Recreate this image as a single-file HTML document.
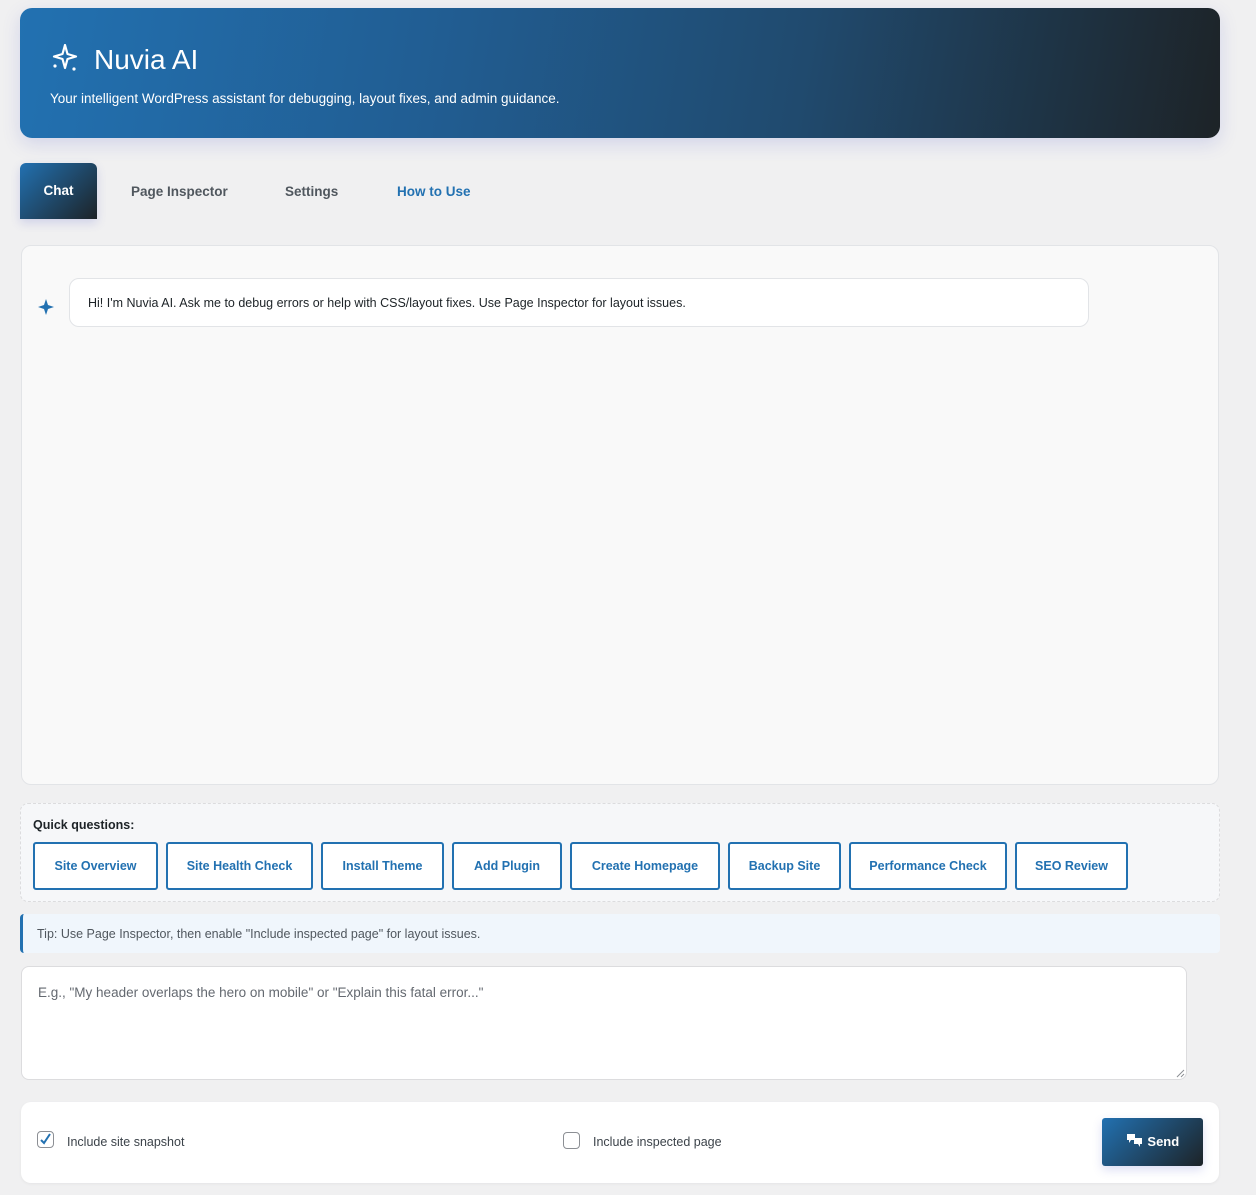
<!DOCTYPE html>
<html><head><meta charset="utf-8"><style>
*{box-sizing:border-box}
body{margin:0;background:#f0f0f1;font-family:"Liberation Sans",sans-serif;color:#1d2327;width:1256px;height:1195px;position:relative;overflow:hidden}
.abs{position:absolute}
.hdr{left:20px;top:8px;width:1200px;height:130px;border-radius:12px;background:linear-gradient(100deg,#2271b1 0%,#215d92 35%,#204a6e 65%,#1d2327 100%);box-shadow:0 6px 18px rgba(80,90,200,.18);color:#fff}
.hdr h1{position:absolute;left:74px;top:36px;margin:0;font-size:28px;font-weight:normal}
.hdr p{position:absolute;left:30px;top:83px;margin:0;font-size:13.5px}
.tab{top:163px;height:56px;font-size:13.5px;font-weight:bold;color:#50575e;line-height:58px}
.chat{left:20px;top:163px;width:77px;background:linear-gradient(135deg,#2271b1,#1d2327);color:#fff;text-align:center;border-radius:6px 6px 0 0;line-height:56px;box-shadow:0 4px 10px rgba(80,90,200,.2)}
.panel{left:21px;top:245px;width:1198px;height:540px;background:#f9f9f9;border:1px solid #e2e4e7;border-radius:10px}
.bubble{left:69px;top:278px;width:1020px;height:49px;background:#fff;border:1px solid #e2e4e7;border-radius:10px;font-size:12.5px;padding:0 18px;line-height:48px}
.quick{left:20px;top:803px;width:1200px;height:99px;background:#f6f7f9;border:1px dashed #dcdcde;border-radius:8px}
.btn{top:842px;height:48px;border:2px solid #2271b1;border-radius:3px;background:#fff;color:#2271b1;font-size:12.5px;font-weight:bold;text-align:center;line-height:44px}
.tip{left:20px;top:914px;width:1200px;height:39px;background:#f0f6fc;border-left:3px solid #2271b1;border-radius:4px;font-size:12.5px;color:#50575e;line-height:40px;padding-left:14px}
.ta{left:21px;top:966px;width:1166px;height:114px;background:#fff;border:1px solid #dcdcde;border-radius:8px;font-size:13.5px;color:#646970;padding:18px 16px}
.bot{left:21px;top:1102px;width:1198px;height:81px;background:#fff;border-radius:10px;box-shadow:0 1px 3px rgba(0,0,0,.05)}
.cb{width:17px;height:17px;border:1px solid #8c8f94;border-radius:4px;background:#fff}
.lbl{font-size:12.5px;color:#3c434a}
.send{left:1102px;top:1118px;width:101px;height:48px;background:linear-gradient(135deg,#2271b1,#1d2327);border-radius:3px;color:#fff;font-size:13px;font-weight:bold;line-height:48px;text-align:center;box-shadow:0 4px 10px rgba(80,90,200,.2)}
</style></head><body>
<div class="abs hdr">
<svg class="abs" style="left:32px;top:36px" width="28" height="28" viewBox="0 0 28 28" fill="#fff"><path d="M13 1 L15.5 10 L24 12.5 L15.5 15 L13 24 L10.5 15 L2 12.5 L10.5 10Z" fill="none" stroke="#fff" stroke-width="2.2" stroke-linejoin="round"/><circle cx="3" cy="22" r="1.6"/><circle cx="22" cy="25" r="1.6"/></svg>
<h1>Nuvia AI</h1>
<p>Your intelligent WordPress assistant for debugging, layout fixes, and admin guidance.</p>
</div>
<div class="abs tab chat">Chat</div>
<div class="abs tab" style="left:131px">Page Inspector</div>
<div class="abs tab" style="left:285px">Settings</div>
<div class="abs tab" style="left:397px;color:#2271b1">How to Use</div>
<div class="abs panel"></div>
<svg class="abs" style="left:38px;top:299px" width="16" height="16" viewBox="0 0 16 16"><path d="M8 0 L10 6 L16 8 L10 10 L8 16 L6 10 L0 8 L6 6Z" fill="#2271b1"/></svg>
<div class="abs bubble">Hi! I'm Nuvia AI. Ask me to debug errors or help with CSS/layout fixes. Use Page Inspector for layout issues.</div>
<div class="abs quick"></div>
<div class="abs" style="left:33px;top:818px;font-size:12.5px;font-weight:bold">Quick questions:</div>
<div class="abs btn" style="left:33px;width:125px">Site Overview</div>
<div class="abs btn" style="left:166px;width:147px">Site Health Check</div>
<div class="abs btn" style="left:321px;width:123px">Install Theme</div>
<div class="abs btn" style="left:452px;width:110px">Add Plugin</div>
<div class="abs btn" style="left:570px;width:150px">Create Homepage</div>
<div class="abs btn" style="left:728px;width:113px">Backup Site</div>
<div class="abs btn" style="left:849px;width:158px">Performance Check</div>
<div class="abs btn" style="left:1015px;width:113px">SEO Review</div>
<div class="abs tip">Tip: Use Page Inspector, then enable "Include inspected page" for layout issues.</div>
<div class="abs ta">E.g., "My header overlaps the hero on mobile" or "Explain this fatal error..."</div>
<svg class="abs" style="left:1176px;top:1069px" width="9" height="9" viewBox="0 0 9 9"><path d="M8 1 L1 8 M8 5 L5 8" stroke="#8c8f94" stroke-width="1"/></svg>
<div class="abs bot"></div>
<div class="abs cb" style="left:37px;top:1131px"><svg width="15" height="15" viewBox="0 0 15 15"><path d="M3 8 L6 11 L12 2" fill="none" stroke="#2271b1" stroke-width="2"/></svg></div>
<div class="abs lbl" style="left:67px;top:1135px">Include site snapshot</div>
<div class="abs cb" style="left:563px;top:1132px"></div>
<div class="abs lbl" style="left:593px;top:1135px">Include inspected page</div>
<div class="abs send"><svg style="vertical-align:-3px" width="18" height="16" viewBox="0 0 18 16" fill="#fff"><path d="M1 1h8v6H5l-2 3V7H1z"/><path d="M8 5h8v6h-2v3l-2-3H8z"/></svg> Send</div>
</body></html>
